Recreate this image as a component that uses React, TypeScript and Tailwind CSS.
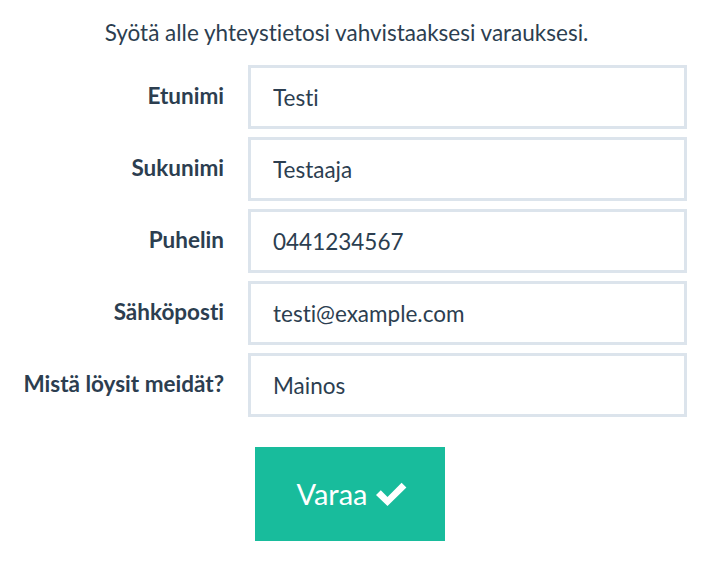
import React from "react";

const fields: { label: string; value: string }[] = [
  { label: "Etunimi", value: "Testi" },
  { label: "Sukunimi", value: "Testaaja" },
  { label: "Puhelin", value: "0441234567" },
  { label: "Sähköposti", value: "testi@example.com" },
  { label: "Mistä löysit meidät?", value: "Mainos" },
];

export default function App() {
  return (
    <div
      className="w-[719px] h-[569px] bg-white text-[#2c3e50] [font-variant-ligatures:none]"
      style={{ fontFamily: "Lato, 'Open Sans', sans-serif" }}
    >
      <p className="w-[693px] pt-[17px] text-center text-[22.5px] leading-[32px]">
        Syötä alle yhteystietosi vahvistaaksesi varauksesi.
      </p>
      <div className="mt-[16px] grid grid-cols-[224px_439px] gap-x-6 gap-y-2">
        {fields.map((f) => (
          <React.Fragment key={f.label}>
            <label className="flex items-center justify-end pb-[3px] text-right text-[22.5px] font-bold leading-[32px] whitespace-nowrap">
              {f.label}
            </label>
            <input
              readOnly
              value={f.value}
              className="h-[64px] w-full border-[3px] border-[#dce4ec] bg-white px-[22px] text-[22.5px] text-[#2c3e50] outline-none [font-variant-ligatures:none]"
              style={{ fontFamily: "Lato, 'Open Sans', sans-serif" }}
            />
          </React.Fragment>
        ))}
      </div>
      <button
        type="button"
        className="ml-[255px] mt-[30px] flex h-[94px] w-[190px] items-center justify-center gap-[8px] bg-[#18bc9c] pl-[3px] text-[29px] text-white"
        style={{ fontFamily: "Lato, 'Open Sans', sans-serif" }}
      >
        <span>Varaa</span>
        <svg width="31" height="24" viewBox="0 0 31 24" fill="white" aria-hidden>
          <polygon points="0,13 4.8,8.2 11.5,14.9 25.6,0.8 30.4,5.6 11.5,24" />
        </svg>
      </button>
    </div>
  );
}
